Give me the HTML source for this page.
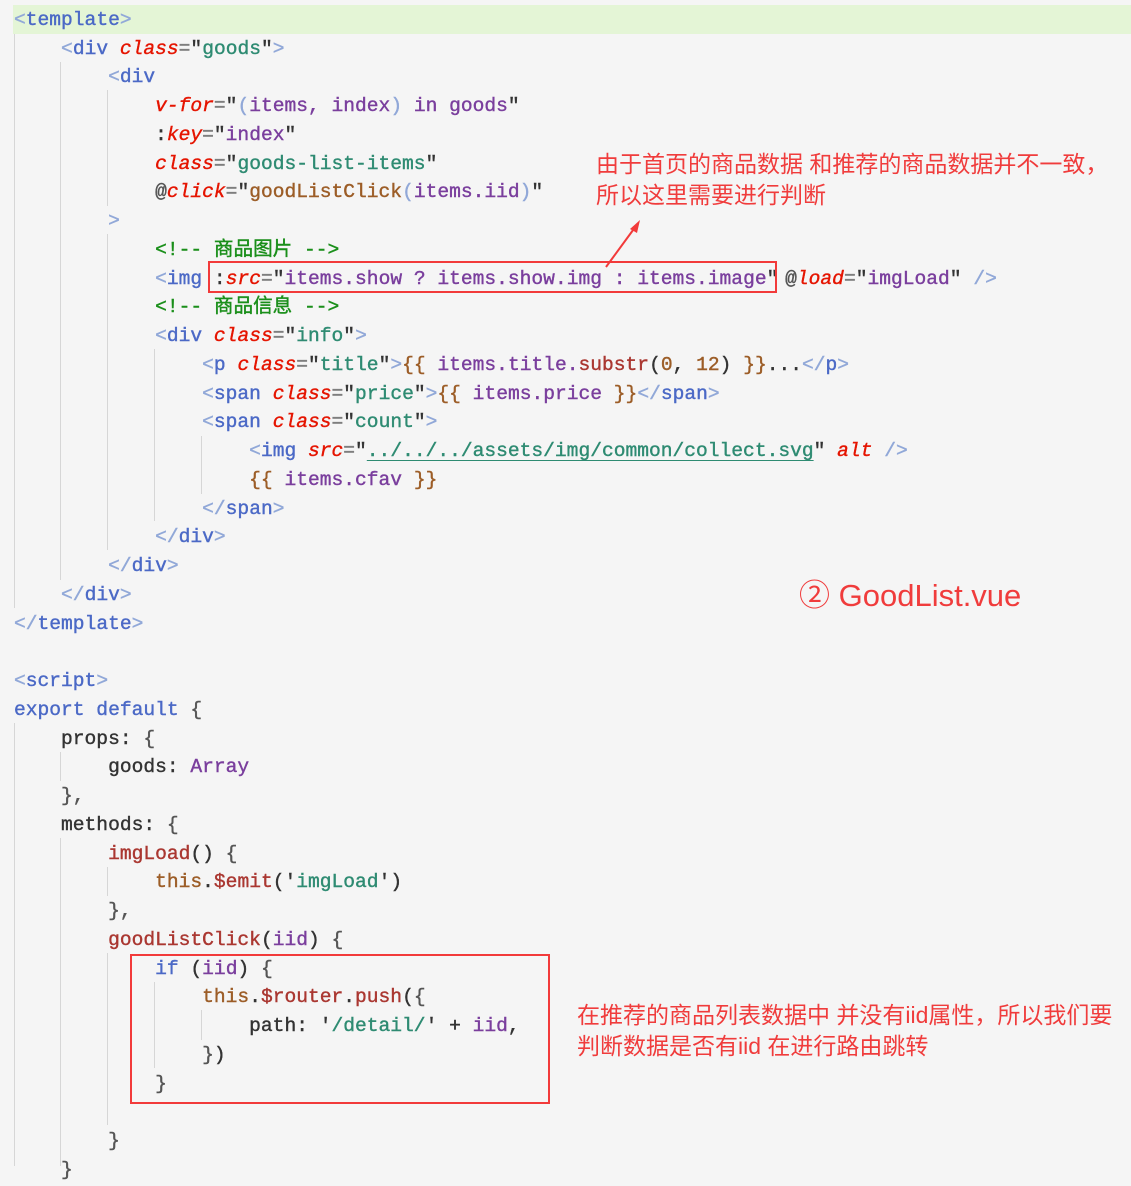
<!DOCTYPE html>
<html><head><meta charset="utf-8"><style>
html,body{margin:0;padding:0}
body{width:1131px;height:1166px;background:#f5f5f5;position:relative;overflow:hidden;font-family:"Liberation Mono","Noto Sans CJK SC",monospace;font-size:19.6px}
.l{position:absolute;left:14px;height:29px;line-height:31px;white-space:pre;color:#333;-webkit-text-stroke:0.4px currentColor}
.g{position:absolute;width:1px;background:#d6d6d6}
.t{color:#4b69c6}.b{color:#91a8d8}.a{color:#e51400;font-style:italic}.e{color:#777}
.s{color:#2e8b72}.p{color:#7a3e9d}.f{color:#aa3731}.o{color:#9c5d27}.c{color:#1a8f1a}.k{color:#4b69c6}.d{color:#555}
.ann{position:absolute;color:#f03c3c;font-family:"Liberation Sans","Noto Sans CJK SC",sans-serif;font-size:23px;line-height:31px;white-space:nowrap}
.box{position:absolute;border:2.5px solid #f23a3a}
</style></head><body>
<div style="position:absolute;left:13px;top:5px;width:1118px;height:29px;background:#e4f5d6"></div>
<div class="g" style="left:14px;top:34px;height:574px"></div>
<div class="g" style="left:14px;top:723px;height:443px"></div>
<div class="g" style="left:60px;top:62px;height:518px"></div>
<div class="g" style="left:60px;top:752px;height:29px"></div>
<div class="g" style="left:60px;top:838px;height:328px"></div>
<div class="g" style="left:107px;top:90px;height:116px"></div>
<div class="g" style="left:107px;top:234px;height:316px"></div>
<div class="g" style="left:107px;top:867px;height:29px"></div>
<div class="g" style="left:107px;top:953px;height:172px"></div>
<div class="g" style="left:154px;top:349px;height:172px"></div>
<div class="g" style="left:154px;top:982px;height:86px"></div>
<div class="g" style="left:201px;top:436px;height:58px"></div>
<div class="g" style="left:201px;top:1010px;height:30px"></div>

<div class="l" style="top:5px"><span class="b">&lt;</span><span class="t">template</span><span class="b">&gt;</span></div>
<div class="l" style="top:34px">    <span class="b">&lt;</span><span class="t">div</span> <span class="a">class</span><span class="e">=</span>"<span class="s">goods</span>"<span class="b">&gt;</span></div>
<div class="l" style="top:62px">        <span class="b">&lt;</span><span class="t">div</span></div>
<div class="l" style="top:91px">            <span class="a">v-for</span><span class="e">=</span>"<span class="b">(</span><span class="p">items, index</span><span class="b">)</span> <span class="p">in goods</span>"</div>
<div class="l" style="top:120px">            :<span class="a">key</span><span class="e">=</span>"<span class="p">index</span>"</div>
<div class="l" style="top:149px">            <span class="a">class</span><span class="e">=</span>"<span class="s">goods-list-items</span>"</div>
<div class="l" style="top:177px">            <span class="d">@</span><span class="a">click</span><span class="e">=</span>"<span class="o">goodListClick</span><span class="b">(</span><span class="p">items.iid</span><span class="b">)</span>"</div>
<div class="l" style="top:206px">        <span class="b">&gt;</span></div>
<div class="l" style="top:235px">            <span class="c">&lt;!-- 商品图片 --&gt;</span></div>
<div class="l" style="top:264px">            <span class="b">&lt;</span><span class="t">img</span> :<span class="a">src</span><span class="e">=</span>"<span class="p">items.show ? items.show.img : items.image</span>"<span style="letter-spacing:-5px"> </span><span class="d">@</span><span class="a">load</span><span class="e">=</span>"<span class="p">imgLoad</span>" <span class="b">/&gt;</span></div>
<div class="l" style="top:292px">            <span class="c">&lt;!-- 商品信息 --&gt;</span></div>
<div class="l" style="top:321px">            <span class="b">&lt;</span><span class="t">div</span> <span class="a">class</span><span class="e">=</span>"<span class="s">info</span>"<span class="b">&gt;</span></div>
<div class="l" style="top:350px">                <span class="b">&lt;</span><span class="t">p</span> <span class="a">class</span><span class="e">=</span>"<span class="s">title</span>"<span class="b">&gt;</span><span class="o">{{</span> <span class="p">items.title.</span><span class="f">substr</span>(<span class="o">0</span>, <span class="o">12</span>) <span class="o">}}</span>...<span class="b">&lt;/</span><span class="t">p</span><span class="b">&gt;</span></div>
<div class="l" style="top:379px">                <span class="b">&lt;</span><span class="t">span</span> <span class="a">class</span><span class="e">=</span>"<span class="s">price</span>"<span class="b">&gt;</span><span class="o">{{</span> <span class="p">items.price</span> <span class="o">}}</span><span class="b">&lt;/</span><span class="t">span</span><span class="b">&gt;</span></div>
<div class="l" style="top:407px">                <span class="b">&lt;</span><span class="t">span</span> <span class="a">class</span><span class="e">=</span>"<span class="s">count</span>"<span class="b">&gt;</span></div>
<div class="l" style="top:436px">                    <span class="b">&lt;</span><span class="t">img</span> <span class="a">src</span><span class="e">=</span>"<span class="s" style="text-decoration:underline;text-underline-offset:4px">../../../assets/img/common/collect.svg</span>" <span class="a">alt</span> <span class="b">/&gt;</span></div>
<div class="l" style="top:465px">                    <span class="o">{{</span> <span class="p">items.cfav</span> <span class="o">}}</span></div>
<div class="l" style="top:494px">                <span class="b">&lt;/</span><span class="t">span</span><span class="b">&gt;</span></div>
<div class="l" style="top:522px">            <span class="b">&lt;/</span><span class="t">div</span><span class="b">&gt;</span></div>
<div class="l" style="top:551px">        <span class="b">&lt;/</span><span class="t">div</span><span class="b">&gt;</span></div>
<div class="l" style="top:580px">    <span class="b">&lt;/</span><span class="t">div</span><span class="b">&gt;</span></div>
<div class="l" style="top:609px"><span class="b">&lt;/</span><span class="t">template</span><span class="b">&gt;</span></div>
<div class="l" style="top:666px"><span class="b">&lt;</span><span class="t">script</span><span class="b">&gt;</span></div>
<div class="l" style="top:695px"><span class="k">export default</span> <span class="d">{</span></div>
<div class="l" style="top:724px">    props: <span class="d">{</span></div>
<div class="l" style="top:752px">        goods: <span class="p">Array</span></div>
<div class="l" style="top:781px">    <span class="d">},</span></div>
<div class="l" style="top:810px">    methods: <span class="d">{</span></div>
<div class="l" style="top:839px">        <span class="f">imgLoad</span>() <span class="d">{</span></div>
<div class="l" style="top:867px">            <span class="o">this</span>.<span class="f">$emit</span>('<span class="s">imgLoad</span>')</div>
<div class="l" style="top:896px">        <span class="d">},</span></div>
<div class="l" style="top:925px">        <span class="f">goodListClick</span>(<span class="p">iid</span>) <span class="d">{</span></div>
<div class="l" style="top:954px">            <span class="k">if</span> (<span class="p">iid</span>) <span class="d">{</span></div>
<div class="l" style="top:982px">                <span class="o">this</span>.<span class="f">$router</span>.<span class="f">push</span>(<span class="d">{</span></div>
<div class="l" style="top:1011px">                    path: '<span class="s">/detail/</span>' + <span class="p">iid</span>,</div>
<div class="l" style="top:1040px">                <span class="d">}</span>)</div>
<div class="l" style="top:1069px">            <span class="d">}</span></div>
<div class="l" style="top:1126px">        <span class="d">}</span></div>
<div class="l" style="top:1155px">    <span class="d">}</span></div>

<div class="box" style="left:208px;top:261px;width:565px;height:28px"></div>
<div class="box" style="left:130px;top:954px;width:416px;height:146px"></div>
<svg style="position:absolute;left:0;top:0" width="1131" height="1166"><line x1="606" y1="267" x2="636" y2="226" stroke="#f23a3a" stroke-width="2"/><polygon points="640,220 630,229 637,233" fill="#f23a3a"/></svg>

<div class="ann" style="left:596px;top:149px">由于首页的商品数据 和推荐的商品数据并不一致，</div>
<div class="ann" style="left:596px;top:180px">所以这里需要进行判断</div>
<div class="ann" style="left:799px;top:578px;font-size:31px;line-height:36px">② GoodList.vue</div>
<div class="ann" style="left:577px;top:1000px">在推荐的商品列表数据中 并没有iid属性，所以我们要</div>
<div class="ann" style="left:577px;top:1031px">判断数据是否有iid 在进行路由跳转</div>
</body></html>
